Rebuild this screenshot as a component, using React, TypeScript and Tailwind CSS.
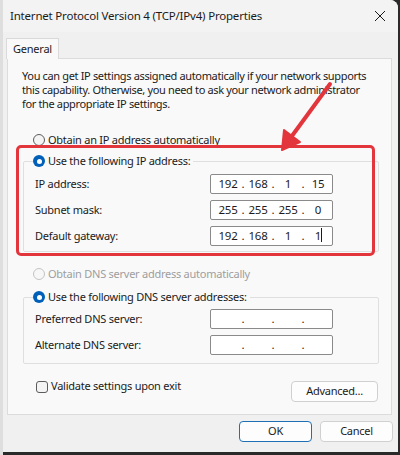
import React from "react";

const font = { fontFamily: '"Noto Sans", "Open Sans", Arial, sans-serif' };

const Radio = ({ checked = false, disabled = false }: { checked?: boolean; disabled?: boolean }) => {
  if (checked) {
    return (
      <span className="w-[12px] h-[12px] rounded-full bg-[#005fb8] flex items-center justify-center shrink-0">
        <span className="w-[5px] h-[5px] rounded-full bg-white" />
      </span>
    );
  }
  return (
    <span
      className={`w-[12px] h-[12px] rounded-full border shrink-0 ${
        disabled ? "border-[#c4c4c4] bg-[#f7f7f7]" : "border-[#5c5c5c] bg-[#f4f4f4]"
      }`}
    />
  );
};

const IpBox = ({ parts, caret = false }: { parts: string[]; caret?: boolean }) => (
  <div className="w-[123px] h-[20px] bg-white border border-[#8a8a8a] rounded-[2px] flex items-center pl-[5px] text-[11.5px] text-[#1b1b1b]">
    {parts.map((p, i) => (
      <React.Fragment key={i}>
        <span className="w-[24px] text-center relative">
          {p}
          {caret && i === 3 && <span className="absolute top-[1px] left-[15px] w-[1px] h-[14px] bg-[#1b1b1b]" />}
        </span>
        {i < 3 && <span className="w-[6px] text-center">.</span>}
      </React.Fragment>
    ))}
  </div>
);

const Row = ({ label, parts, caret }: { label: string; parts: string[]; caret?: boolean }) => (
  <div className="flex items-center justify-between h-[20px]">
    <span className="pl-[1px]">{label}</span>
    <div className="mr-[45px]">
      <IpBox parts={parts} caret={caret} />
    </div>
  </div>
);

export default function App() {
  return (
    <div className="w-[400px] h-[455px] bg-[#2a2a2a] relative overflow-hidden" style={font}>
      <div className="absolute left-0 top-0 w-[3px] h-[455px] bg-[#dedede]" />
      <div className="ml-[2px] w-[396px] h-[452px] bg-[#f0f0f0] rounded-tr-[8px] text-[11px] tracking-[-0.25px] text-[#1b1b1b] flex flex-col">
        {/* title bar */}
        <div className="h-[32px] flex items-center justify-between pl-[8px] pr-[10px] bg-[#f3f3f3] rounded-tr-[8px]">
          <span className="text-[11.5px] tracking-[-0.2px]">Internet Protocol Version 4 (TCP/IPv4) Properties</span>
          <svg width="12" height="12" viewBox="0 0 12 12" className="mr-[2px]">
            <path d="M1 1 L11 11 M11 1 L1 11" stroke="#1b1b1b" strokeWidth="1" />
          </svg>
        </div>

        {/* tab */}
        <div className="pl-[4px] mt-[6px] flex">
          <div className="w-[53px] h-[21px] bg-[#f9f9f9] border border-b-0 border-[#d9d9d9] flex items-center justify-center relative z-10 -mb-[1px]">
            General
          </div>
        </div>

        {/* panel */}
        <div className="ml-[5px] w-[385px] h-[357px] bg-[#f9f9f9] border border-[#dcdcdc] relative">
          <div className="pl-[14px] pt-[10px] leading-[14px] tracking-[-0.35px]">
            <p>You can get IP settings assigned automatically if your network supports</p>
            <p>this capability. Otherwise, you need to ask your network administrator</p>
            <p>for the appropriate IP settings.</p>
          </div>

          <div className="flex items-center gap-[3px] pl-[25px] mt-[22px] h-[14px]">
            <Radio />
            <span>Obtain an IP address automatically</span>
          </div>

          <fieldset className="ml-[15px] w-[356px] mt-[7px] border border-[#dfdfdf] pl-[10px] pb-[5px] rounded-[2px]">
            <legend className="flex items-center gap-[3px] pr-[3px] -ml-[1px] h-[14px]">
              <Radio checked />
              <span>Use the following IP address:</span>
            </legend>
            <div className="flex flex-col gap-[6px] mt-[6px]">
              <Row label="IP address:" parts={["192", "168", "1", "15"]} />
              <Row label="Subnet mask:" parts={["255", "255", "255", "0"]} />
              <Row label="Default gateway:" parts={["192", "168", "1", "1"]} caret />
            </div>
          </fieldset>

          <div className="flex items-center gap-[3px] pl-[25px] mt-[15px] h-[14px] text-[#9e9e9e]">
            <Radio disabled />
            <span>Obtain DNS server address automatically</span>
          </div>

          <fieldset className="ml-[15px] w-[356px] mt-[9px] border border-[#dfdfdf] pl-[10px] pb-[8px] rounded-[2px]">
            <legend className="flex items-center gap-[3px] pr-[3px] -ml-[1px] h-[14px]">
              <Radio checked />
              <span>Use the following DNS server addresses:</span>
            </legend>
            <div className="flex flex-col gap-[6px] mt-[5px]">
              <Row label="Preferred DNS server:" parts={["", "", "", ""]} />
              <Row label="Alternate DNS server:" parts={["", "", "", ""]} />
            </div>
          </fieldset>

          <div className="flex items-center justify-between mt-[17px] pl-[28px] pr-[13px]">
            <div className="flex items-center gap-[3px] -mt-[10px]">
              <span className="w-[12px] h-[12px] border border-[#5c5c5c] rounded-[3px] bg-[#f4f4f4]" />
              <span>Validate settings upon exit</span>
            </div>
            <button className="w-[87px] h-[21px] bg-[#fdfdfd] border border-[#d0d0d0] rounded-[4px] text-[11px]">
              Advanced...
            </button>
          </div>

          {/* red highlight */}
          <div className="absolute left-[8px] top-[86px] w-[359px] h-[111px] border-[3px] border-[#e2363c] rounded-[5px] pointer-events-none" />
        </div>

        {/* buttons */}
        <div className="flex justify-end gap-[8px] pr-[5px] mt-[6px]">
          <button className="w-[73px] h-[21px] bg-[#fdfdfd] border border-[#1f6fb5] rounded-[4px] text-[11px]">OK</button>
          <button className="w-[73px] h-[21px] bg-[#fdfdfd] border border-[#d0d0d0] rounded-[4px] text-[11px]">Cancel</button>
        </div>
      </div>

      {/* arrow */}
      <svg className="absolute left-0 top-0 pointer-events-none" width="400" height="455">
        <line x1="330" y1="84" x2="289" y2="140" stroke="#e2363c" strokeWidth="4" strokeLinecap="round" />
        <path d="M282 150 L284 130 L300 142 Z" fill="#e2363c" stroke="#e2363c" strokeWidth="2" strokeLinejoin="round" />
      </svg>
    </div>
  );
}
